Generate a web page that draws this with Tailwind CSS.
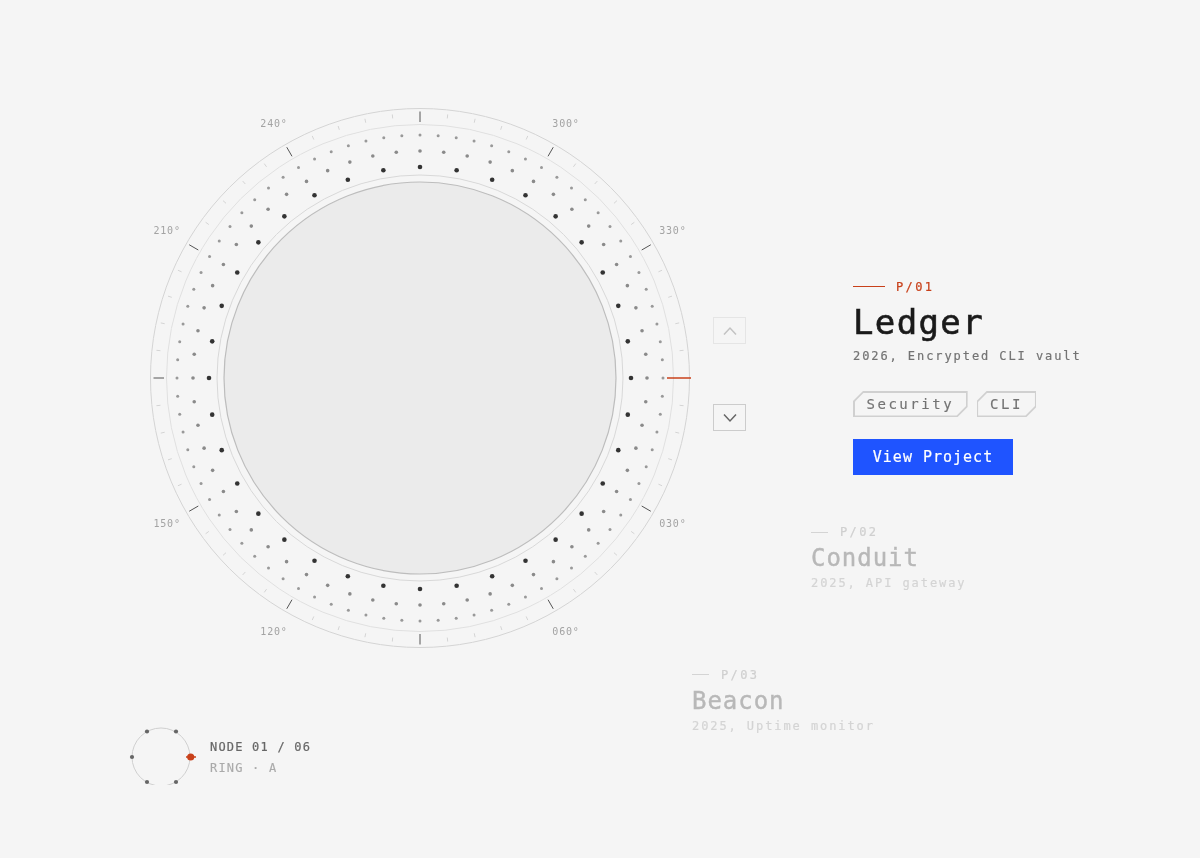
<!DOCTYPE html>
<html lang="en">
<head>
    <meta charset="UTF-8">
    <meta name="viewport" content="width=device-width, initial-scale=1.0">
    <title>Projects</title>
    <script src="https://cdn.jsdelivr.net/npm/@tailwindcss/browser@4"></script>
</head>
<body class="bg-[#f5f5f5] font-['DejaVu_Sans_Mono',monospace] antialiased overflow-hidden">
    <div class="relative w-[1200px] h-[858px] overflow-hidden">

        <!-- Dial -->
        <svg id="dial" class="absolute left-0 top-0 [will-change:transform]" width="840" height="858" viewBox="0 0 840 858" fill="none">
            <circle cx="420" cy="378" r="269.5" stroke="#d4d4d4"/>
            <circle cx="420" cy="378" r="253.5" stroke="#e0e0e0"/>
            <circle cx="420" cy="378" r="203" stroke="#d8d8d8"/>
            <circle cx="420" cy="378" r="196" fill="#ebebeb" stroke="#bdbdbd" stroke-width="1.2"/>
            <g id="ticks"></g>
            <g id="dots"></g>
            <line x1="667" y1="378" x2="691" y2="378" stroke="#c8401a" stroke-width="1.5"/>
            <g id="labels" font-size="10" letter-spacing="0.8" fill="#a3a3a3" text-anchor="middle"></g>
        </svg>

        <!-- Prev / next -->
        <button class="absolute left-[713px] top-[317px] w-[33px] h-[27px] flex items-center justify-center border border-[#cccccc] opacity-40">
            <svg width="16" height="10" viewBox="0 0 16 10" fill="none" stroke="#777777" stroke-width="1.5"><path d="M2 8.5 8 2l6 6.5"/></svg>
        </button>
        <button class="absolute left-[713px] top-[404px] w-[33px] h-[27px] flex items-center justify-center border-[1.5px] border-[#cccccc]">
            <svg width="16" height="10" viewBox="0 0 16 10" fill="none" stroke="#666666" stroke-width="1.5"><path d="M2 1.5 8 8l6-6.5"/></svg>
        </button>

        <!-- Active project -->
        <div class="absolute left-[853px] top-[278px] [will-change:transform]">
            <div class="flex items-center gap-[11px] h-4">
                <span class="w-8 h-px bg-[#c8401a]"></span>
                <span class="text-xs tracking-[2.4px] text-[#c8401a] translate-y-px [-webkit-text-stroke:0.2px]">P/01</span>
            </div>
            <h2 class="mt-[6px] text-[34px] leading-[44px] tracking-[1.36px] text-[#1a1a1a] [-webkit-text-stroke:0.6px]">Ledger</h2>
            <p class="mt-1 text-xs leading-4 tracking-[1.92px] text-[#737373] [-webkit-text-stroke:0.2px]">2026, Encrypted CLI vault</p>
            <div class="flex gap-[9px] mt-[27px]">
                <div class="p-[1.5px] bg-[#d0d0d0] [clip-path:polygon(10px_0,100%_0,100%_calc(100%-10px),calc(100%-10px)_100%,0_100%,0_10px)]">
                    <div class="h-[23px] px-3 flex items-center text-sm tracking-[2.52px] text-[#737373] bg-[#f5f5f5] [-webkit-text-stroke:0.15px] [clip-path:polygon(9.4px_0,100%_0,100%_calc(100%-9.4px),calc(100%-9.4px)_100%,0_100%,0_9.4px)]">Security</div>
                </div>
                <div class="p-[1.5px] bg-[#d0d0d0] [clip-path:polygon(10px_0,100%_0,100%_calc(100%-10px),calc(100%-10px)_100%,0_100%,0_10px)]">
                    <div class="h-[23px] px-3 flex items-center text-sm tracking-[2.52px] text-[#737373] bg-[#f5f5f5] [-webkit-text-stroke:0.15px] [clip-path:polygon(9.4px_0,100%_0,100%_calc(100%-9.4px),calc(100%-9.4px)_100%,0_100%,0_9.4px)]">CLI</div>
                </div>
            </div>
            <button class="mt-[22px] w-40 h-9 bg-[#1f54ff] text-white text-[15px] tracking-[1px] [-webkit-text-stroke:0.2px]">View Project</button>
        </div>

        <!-- Other projects on the arc -->
        <div class="absolute left-[811px] top-[524px] [will-change:transform]">
            <div class="flex items-center gap-3 h-4">
                <span class="w-[17px] h-px bg-[#d4d4d4]"></span>
                <span class="text-xs tracking-[2.4px] text-[#cfcfcf] [-webkit-text-stroke:0.2px]">P/02</span>
            </div>
            <h2 class="mt-[2px] text-2xl leading-8 tracking-[0.96px] text-[#b8b8b8] [-webkit-text-stroke:0.4px]">Conduit</h2>
            <p class="mt-[1px] text-xs leading-4 tracking-[1.92px] text-[#d4d4d4] [-webkit-text-stroke:0.2px]">2025, API gateway</p>
        </div>
        <div class="absolute left-[692px] top-[666px] [will-change:transform]">
            <div class="flex items-center gap-3 h-4">
                <span class="w-[17px] h-px bg-[#d4d4d4]"></span>
                <span class="text-xs tracking-[2.4px] text-[#cfcfcf] translate-y-px [-webkit-text-stroke:0.2px]">P/03</span>
            </div>
            <h2 class="mt-[3px] text-2xl leading-8 tracking-[0.96px] text-[#b8b8b8] [-webkit-text-stroke:0.4px]">Beacon</h2>
            <p class="mt-[1px] text-xs leading-4 tracking-[1.92px] text-[#d4d4d4] [-webkit-text-stroke:0.2px]">2025, Uptime monitor</p>
        </div>

        <!-- Mini map -->
        <div class="absolute left-[128px] top-[724px] flex items-center gap-[12px] [will-change:transform]">
            <svg width="70" height="61" viewBox="0 0 70 61" fill="none">
                <circle cx="33" cy="33" r="29" stroke="#cfcfcf"/>
                <circle cx="19" cy="7.5" r="2.1" fill="#666666"/>
                <circle cx="48" cy="7.5" r="2.1" fill="#666666"/>
                <circle cx="4" cy="33" r="2.1" fill="#666666"/>
                <circle cx="19" cy="58" r="2.1" fill="#666666"/>
                <circle cx="48" cy="58" r="2.1" fill="#666666"/>
                <circle cx="62.7" cy="33" r="3.6" fill="#c8401a"/>
                <line x1="58" y1="33" x2="68" y2="33" stroke="#c8401a" stroke-width="1.5"/>
            </svg>
            <div class="mt-[6px]">
                <p class="text-xs leading-4 tracking-[1.2px] text-[#666666] [-webkit-text-stroke:0.2px]">NODE 01 / 06</p>
                <p class="mt-[5px] text-xs leading-4 tracking-[1.2px] text-[#aaaaaa] [-webkit-text-stroke:0.15px]">RING · A</p>
            </div>
        </div>
    </div>

    <script>
        const NS = 'http://www.w3.org/2000/svg';
        const cx = 420, cy = 378;

        function add(parent, tag, attrs, text) {
            const el = document.createElementNS(NS, tag);
            for (const k in attrs) el.setAttribute(k, attrs[k]);
            if (text) el.textContent = text;
            document.getElementById(parent).appendChild(el);
        }

        function pt(r, deg) {
            const a = deg * Math.PI / 180;
            return [cx + r * Math.cos(a), cy + r * Math.sin(a)];
        }

        // Scale ticks, every 6 degrees, heavier every 30
        for (let d = 0; d < 360; d += 6) {
            if (d === 0) continue;
            const major = d % 30 === 0;
            const [x1, y1] = pt(major ? 256 : 261, d);
            const [x2, y2] = pt(major ? 266.5 : 265, d);
            add('ticks', 'line', {
                x1, y1, x2, y2,
                stroke: major ? '#555555' : '#d4d4d4',
                'stroke-width': 1
            });
        }

        // Dot rings
        const rings = [
            { r: 211, n: 36, size: 2.3, fill: '#333333' },
            { r: 227, n: 60, size: 1.8, fill: '#8a8a8a' },
            { r: 243, n: 84, size: 1.5, fill: '#999999' }
        ];
        rings.forEach(ring => {
            for (let i = 0; i < ring.n; i++) {
                const [x, y] = pt(ring.r, i * 360 / ring.n);
                add('dots', 'circle', { cx: x, cy: y, r: ring.size, fill: ring.fill });
            }
        });

        // Degree labels (none on the quarter marks)
        [30, 60, 120, 150, 210, 240, 300, 330].forEach(d => {
            const [x, y] = pt(292, d);
            const nudge = d > 180 ? 2 : d === 60 || d === 120 ? 4 : 3;
            add('labels', 'text', { x, y: y + nudge }, String(d).padStart(3, '0') + '°');
        });
    </script>
</body>
</html>
